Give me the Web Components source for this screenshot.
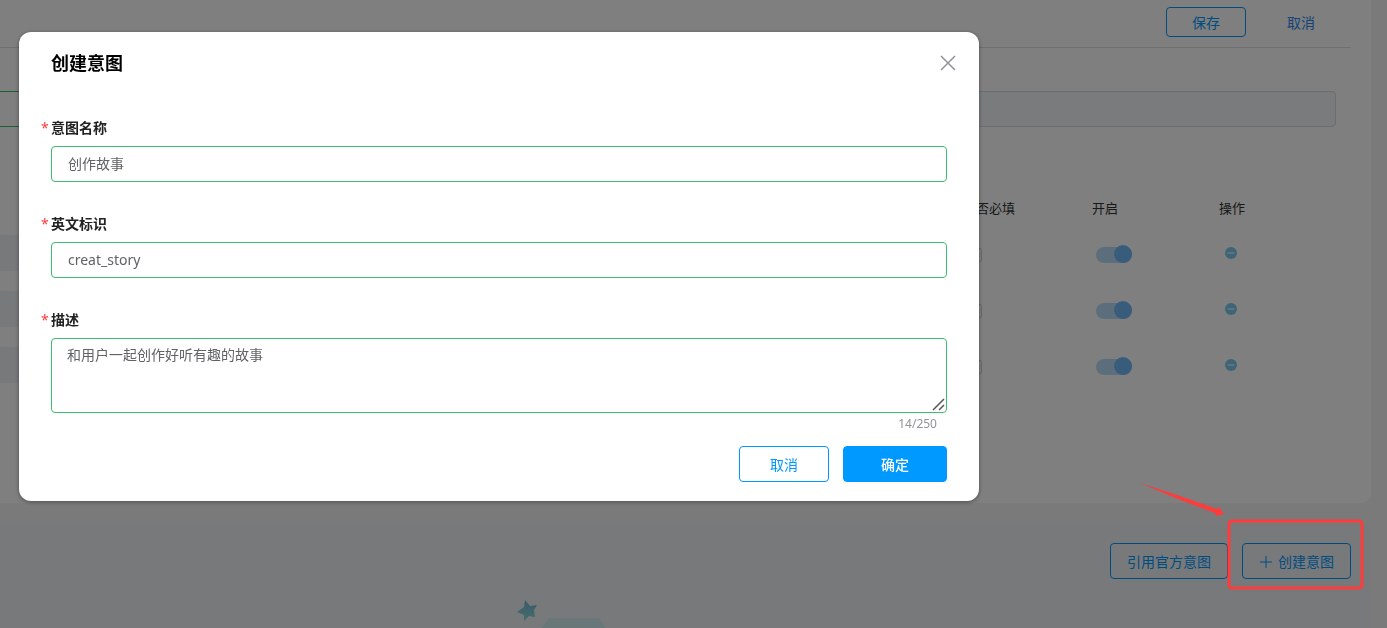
<!DOCTYPE html>
<html lang="zh-CN">
<head>
<meta charset="utf-8">
<meta name="viewport" content="width=device-width, initial-scale=1">
<title>创建意图</title>
<style>
  body {
    margin: 0;
    overflow: hidden;
    background: #f4f4f4;
    color: #303133;
    font: 14px/20px "Noto Sans", "Noto Sans CJK SC", sans-serif;
  }
</style>
</head>
<body>
<intent-page></intent-page>
<intent-dialog heading="创建意图">
  <text-field label="意图名称" value="创作故事"></text-field>
  <text-field label="英文标识" value="creat_story"></text-field>
  <text-field label="描述" value="和用户一起创作好听有趣的故事" multiline count="14/250"></text-field>
  <ui-button slot="actions" class="cancel">取消</ui-button>
  <ui-button slot="actions" class="confirm" variant="primary">确定</ui-button>
</intent-dialog>
<callout-mark></callout-mark>

<script>
class BaseElement extends HTMLElement {
  render(html) {
    this.attachShadow({ mode: "open" }).innerHTML =
      "<style>*{box-sizing:border-box} button,input,textarea{font:inherit;margin:0}</style>" + html;
  }
}

/* Button: outline by default, "primary" is filled, "text" has no frame */
customElements.define("ui-button", class extends BaseElement {
  connectedCallback() {
    this.render(`
      <style>
        :host { display: inline-flex; height: 36px; }
        button {
          display: flex; align-items: center; justify-content: center; gap: 5px;
          width: 100%; padding: 1px 16px 0; cursor: pointer; white-space: nowrap;
          color: #0099ff; background: transparent;
          border: 1px solid #0099ff; border-radius: 4px;
        }
        :host([variant="primary"]) button { background: #0099ff; color: #fff; font-weight: 500; }
        :host([variant="text"]) button { border-color: transparent; color: #2a86ea; }
      </style>
      <button type="button"><slot></slot></button>`);
  }
});

customElements.define("text-field", class extends BaseElement {
  connectedCallback() {
    const value = this.getAttribute("value");
    const control = this.hasAttribute("multiline")
      ? `<textarea id="c">${value}</textarea>`
      : `<input id="c" type="text" value="${value}">`;
    const count = this.getAttribute("count");
    this.render(`
      <style>
        :host { display: block; }
        label { display: block; margin: 0 0 8px -10px; font-weight: 700; color: #222; }
        i { display: inline-block; width: 10px; font-style: normal; font-weight: 400; color: #ff3b3b; }
        input, textarea {
          display: block; width: 100%; border: 1px solid #3dbd6e; border-radius: 4px;
          background: #fff; color: #606266; outline: none;
        }
        input { height: 36px; padding: 0 16px 2px; }
        textarea { height: 75px; padding: 6px 15px; resize: vertical; }
        textarea::-webkit-resizer {
          background: url("data:image/svg+xml,%3Csvg xmlns='http://www.w3.org/2000/svg' width='15' height='15'%3E%3Cpath d='M2 13 13 2M8 13 13 8' stroke='%23555' stroke-width='1.5'/%3E%3C/svg%3E") right bottom no-repeat;
        }
        p { margin: 1px 10px 0; text-align: right; font-size: 12px; color: #909399; }
      </style>
      <label for="c"><i>*</i>${this.getAttribute("label")}</label>
      ${control}
      ${count ? `<p>${count}</p>` : ""}`);
  }
});

customElements.define("intent-dialog", class extends BaseElement {
  connectedCallback() {
    this.render(`
      <style>
        :host {
          position: fixed; inset: 0; overflow: auto; z-index: 10;
          background: rgba(0, 0, 0, .5); padding: 32px 19px;
        }
        section {
          max-width: 960px; padding: 15px 32px 19px; border-radius: 12px;
          background: #fff; box-shadow: 0 1px 4px rgba(0, 0, 0, .4);
        }
        header { display: flex; align-items: center; justify-content: space-between; height: 32px; }
        h2 { margin: 0; font-size: 18px; line-height: 24px; color: #000; }
        .close {
          display: flex; align-items: center; justify-content: center; margin-right: -11px;
          width: 20px; height: 20px; padding: 0; border: 0; background: none; cursor: pointer;
        }
        .fields { display: flex; flex-direction: column; gap: 32px; padding-top: 39px; }
        footer { display: flex; justify-content: flex-end; gap: 14px; padding-top: 12px; }
        ::slotted(.cancel) { width: 90px; }
        ::slotted(.confirm) { width: 104px; }
      </style>
      <section role="dialog" aria-modal="true" aria-labelledby="t">
        <header>
          <h2 id="t">${this.getAttribute("heading")}</h2>
          <button class="close" type="button" aria-label="关闭">
            <svg width="16" height="16" viewBox="0 0 16 16"><path d="M1 1 15 15M15 1 1 15" stroke="#909399" stroke-width="1.5" fill="none"/></svg>
          </button>
        </header>
        <div class="fields"><slot></slot></div>
        <footer><slot name="actions"></slot></footer>
      </section>`);
  }
});

customElements.define("toggle-switch", class extends BaseElement {
  connectedCallback() {
    this.render(`
      <style>
        :host { display: block; }
        input {
          appearance: none; display: flex; justify-content: flex-end; align-items: flex-end;
          width: 36px; height: 16px; border-radius: 8px; background: #b8dcf8;
        }
        input::before { content: ""; width: 18px; height: 18px; border-radius: 50%; background: #73b9f8; }
      </style>
      <input type="checkbox" role="switch" checked aria-label="开启">`);
  }
});

/* Parameter table of the page behind the dialog */
customElements.define("param-table", class extends BaseElement {
  connectedCallback() {
    const row = `
      <tr>
        <td><input class="name" type="text" disabled aria-label="名称"></td>
        <td><input class="tick" type="checkbox" aria-label="是否必填"></td>
        <td><toggle-switch></toggle-switch></td>
        <td><button type="button" aria-label="删除">
          <svg width="12" height="12" viewBox="0 0 12 12"><circle cx="6" cy="6" r="6" fill="#7cc8f0"/><path d="M2.5 6h7" stroke="#fff" stroke-width="1"/></svg>
        </button></td>
      </tr>`;
    this.render(`
      <style>
        :host { display: block; }
        table { width: 100%; table-layout: fixed; border-collapse: collapse; }
        th { height: 36px; padding: 2px 0 0; text-align: left; font-size: 13px; font-weight: 400; color: #303133; }
        td { height: 56px; padding: 0; }
        th:nth-child(2) { width: 129px; }
        th:nth-child(3) { width: 127px; }
        th:nth-child(4) { width: 117px; }
        td:nth-child(2) { padding: 4px 0 0 5px; }
        td:nth-child(3) { padding: 4px 0 0 4px; }
        td:nth-child(4) { padding-left: 6px; }
        .name { display: block; width: 90%; height: 36px; border: 0; background: #f1f3f6; }
        .tick {
          appearance: none; display: block; width: 14px; height: 14px;
          border: 1px solid #d4d7de; border-radius: 2px; background: #fff;
        }
        button { display: flex; padding: 0; border: 0; background: none; }
      </style>
      <table>
        <thead><tr><th></th><th>是否必填</th><th>开启</th><th>操作</th></tr></thead>
        <tbody>${row.repeat(3)}</tbody>
      </table>`);
  }
});

customElements.define("intent-page", class extends BaseElement {
  connectedCallback() {
    this.render(`
      <style>
        :host { display: flex; flex-direction: column; gap: 20px; padding-right: 16px; }
        .card { background: #fff; border-radius: 0 0 10px 0; padding-bottom: 110px; }
        header {
          display: flex; align-items: center; justify-content: flex-end; gap: 20px;
          margin-right: 20px; padding: 7px 15px 10px 0; border-bottom: 1px solid #e0e0e0;
        }
        header ui-button { height: 30px; width: 80px; }
        header ui-button[variant="text"] { width: 70px; }
        .row { display: flex; gap: 40px; padding: 43px 35px 62px 0; }
        .row input { flex: 1; min-width: 0; height: 36px; border: 1px solid #d8dbe2; border-radius: 4px; background: #f5f7fa; }
        .row input.ok { border-color: #3dbd6e; border-left: 0; border-radius: 0 4px 4px 0; background: #fff; }
        param-table { margin-right: 35px; }
        .list { background: #f1f3f6; border-radius: 0 10px 0 0; padding: 20px 20px 0 0; }
        .tools { display: flex; justify-content: flex-end; gap: 14px; }
        .art { display: block; margin: 16px auto 0; }
      </style>
      <div class="card">
        <header><ui-button>保存</ui-button><ui-button variant="text">取消</ui-button></header>
        <div class="row">
          <input class="ok" type="text" aria-label="名称">
          <input type="text" disabled aria-label="标识">
        </div>
        <param-table></param-table>
      </div>
      <div class="list">
        <div class="tools">
          <ui-button>引用官方意图</ui-button>
          <ui-button><svg width="14" height="14" viewBox="0 0 14 14"><path d="M7 1v12M1 7h12" stroke="#0099ff" fill="none"/></svg>创建意图</ui-button>
        </div>
        <svg class="art" width="324" height="180" viewBox="0 0 324 180">
          <defs>
            <linearGradient id="f" x1="0" y1="0" x2="0" y2="1"><stop offset="0" stop-color="#73b4e0"/><stop offset="1" stop-color="#8fdcd0"/></linearGradient>
            <linearGradient id="b" x1="0" y1="0" x2="1" y2="0"><stop offset="0" stop-color="#c4ece8"/><stop offset=".2" stop-color="#d4eff2"/><stop offset=".8" stop-color="#d4eef4"/><stop offset="1" stop-color="#c4ece8"/></linearGradient>
          </defs>
          <path d="M11 5 16 11 23 10 20 15 21 22 15 21 10 26 10 20 3 17 10 12Z" fill="url(#f)"/>
          <path d="M35 23H85L115 68H0Z" fill="url(#b)"/>
        </svg>
      </div>`);
  }
});

/* Red frame and arrow that point out the create button */
customElements.define("callout-mark", class extends BaseElement {
  connectedCallback() {
    this.render(`
      <style>
        :host { position: absolute; top: 480px; right: 21px; z-index: 20; pointer-events: none; }
        svg { display: block; }
      </style>
      <svg width="226" height="111" viewBox="0 0 226 111" aria-hidden="true">
        <path d="M0 3 40 16 77 29 79 27 84 34 76 36 75 33 38 19Z" fill="#ff3b3b"/>
        <rect x="89" y="41" width="133" height="67" rx="3" fill="none" stroke="#ff3b3b" stroke-width="3"/>
      </svg>`);
  }
});
</script>
</body>
</html>
